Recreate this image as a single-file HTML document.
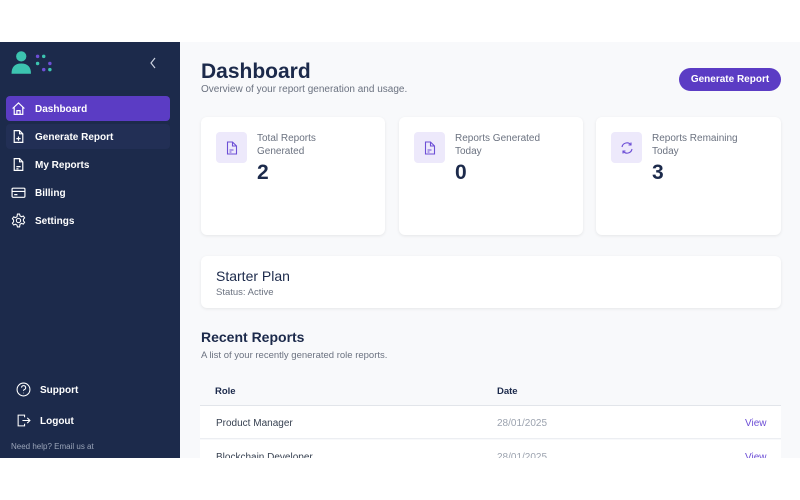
<!DOCTYPE html>
<html><head><style>
*{margin:0;padding:0;box-sizing:border-box}
body{width:800px;height:500px;background:#fff;font-family:"Liberation Sans",sans-serif;position:relative;overflow:hidden}
.app{position:absolute;top:42px;left:0;width:800px;height:416px;background:#f8f9fb;overflow:hidden}
.sb{position:absolute;left:0;top:0;width:180px;height:416px;background:#1c2a4b;color:#fff}
.nav{position:absolute;left:6px;width:164px;height:25px;border-radius:4px;font-size:10px;font-weight:bold;display:flex;align-items:center;padding-left:5px;padding-top:2px}
.nav svg{margin-right:9px;margin-top:-2px}
.a{position:absolute}
.card{position:absolute;background:#fff;border-radius:6px;box-shadow:0 1px 3px rgba(0,0,0,.08)}
.ib{position:absolute;left:15px;top:15px;width:31px;height:31px;background:#ede9fb;border-radius:4px;display:flex;align-items:center;justify-content:center}
.lbl{position:absolute;left:56px;top:15px;font-size:10px;color:#6b7280;line-height:13px}
.num{position:absolute;left:56px;top:44px;font-size:21px;font-weight:bold;color:#1c2a4b}
.row{position:absolute;left:200px;width:581px;height:33px;background:#fff;border-bottom:1px solid #eceef2;font-size:10px;color:#374151}
.row span{position:absolute;top:12px}
</style></head><body>
<div class="app">
<div class="sb">
 <svg class="a" style="left:10px;top:8px" width="46" height="26" viewBox="0 0 45 25">
  <circle cx="11" cy="6" r="5" fill="#3cc4b0"/>
  <path d="M1.5 23 Q1.5 13 11 13 Q20.5 13 20.5 23Z" fill="#3cc4b0"/>
  <circle cx="27" cy="6" r="1.7" fill="#6d4fd6"/><circle cx="33" cy="6" r="1.7" fill="#3cc4b0"/>
  <circle cx="27" cy="13" r="1.7" fill="#3cc4b0"/><circle cx="39" cy="13" r="1.7" fill="#6d4fd6"/>
  <circle cx="33" cy="19" r="1.7" fill="#6d4fd6"/><circle cx="39" cy="19" r="1.7" fill="#3cc4b0"/>
 </svg>
 <svg class="a" style="left:149px;top:15px" width="8" height="12"><path d="M6 1L2 6l4 5" stroke="#cbd2e0" stroke-width="1.2" fill="none"/></svg>
 <div class="nav" style="top:54px;background:#5b3cc4"><svg width="15" height="15" viewBox="0 0 14 14" fill="none" stroke="#fff" stroke-width="1.1"><path d="M1.5 7L7 1.8 12.5 7M3 5.8V12.5h8V5.8M5.5 12.5V9h3v3.5"/></svg>Dashboard</div>
 <div class="nav" style="top:82px;background:#222f55"><svg width="15" height="15" viewBox="0 0 14 14" fill="none" stroke="#fff" stroke-width="1.1"><path d="M3 1.5h5l3 3v8H3z M8 1.5v3h3 M7 7v4 M5 9h4"/></svg>Generate Report</div>
 <div class="nav" style="top:110px"><svg width="15" height="15" viewBox="0 0 14 14" fill="none" stroke="#fff" stroke-width="1.1"><path d="M3 1.5h5l3 3v8H3z M8 1.5v3h3 M5 9h4 M5 11h2"/></svg>My Reports</div>
 <div class="nav" style="top:138px"><svg width="15" height="15" viewBox="0 0 14 14" fill="none" stroke="#fff" stroke-width="1.1"><rect x="1" y="3" width="12" height="8.5" rx="1"/><path d="M1 6h12M3 9h3"/></svg>Billing</div>
 <div class="nav" style="top:166px"><svg width="15" height="15" viewBox="0 0 14 14" fill="none" stroke="#fff" stroke-width="1"><circle cx="7" cy="7" r="2"/><path d="M6 1h2l.4 1.7 1.5.8 1.6-.7 1.2 1.7-1.1 1.3v1.6l1.1 1.3-1.2 1.7-1.6-.7-1.5.8L8 13H6l-.4-1.7-1.5-.8-1.6.7-1.2-1.7 1.1-1.3V6.6L1.3 5.3l1.2-1.7 1.6.7 1.5-.8z"/></svg>Settings</div>
 <div class="nav" style="top:335px;left:11px"><svg width="15" height="15" viewBox="0 0 14 14" fill="none" stroke="#fff" stroke-width="1"><circle cx="7" cy="7" r="6"/><path d="M5.2 5.3a1.9 1.9 0 1 1 2.5 1.8C7.2 7.3 7 7.7 7 8.3M7 10v.5"/></svg>Support</div>
 <div class="nav" style="top:366px;left:11px"><svg width="15" height="15" viewBox="0 0 14 14" fill="none" stroke="#fff" stroke-width="1"><path d="M8 4V2H2v10h6v-2M6 7h7M10.5 4.5 13 7l-2.5 2.5"/></svg>Logout</div>
 <div class="a" style="left:11px;top:400px;font-size:8px;color:#9aa4b8">Need help? Email us at</div>
</div>
<div class="a" style="left:201px;top:18px;font-size:21px;font-weight:bold;color:#1c2a4b">Dashboard</div>
<div class="a" style="left:201px;top:42px;font-size:10px;color:#6b7280">Overview of your report generation and usage.</div>
<div class="a" style="left:679px;top:26px;width:102px;height:23px;border-radius:12px;background:#5b3cc4;color:#fff;font-size:10px;font-weight:bold;text-align:center;line-height:23px">Generate Report</div>
<div class="card" style="left:201px;top:75px;width:184px;height:118px"><div class="ib"><svg width="12" height="14" viewBox="0 0 12 14" fill="none" stroke="#6d4fd6" stroke-width="1.1"><path d="M1.5 1h5l4 4v8h-9z M6.5 1v4h4 M3.5 9h4 M3.5 11h2"/></svg></div><div class="lbl">Total Reports<br>Generated</div><div class="num">2</div></div>
<div class="card" style="left:399px;top:75px;width:184px;height:118px"><div class="ib"><svg width="12" height="14" viewBox="0 0 12 14" fill="none" stroke="#6d4fd6" stroke-width="1.1"><path d="M1.5 1h5l4 4v8h-9z M6.5 1v4h4 M3.5 9h4 M3.5 11h2"/></svg></div><div class="lbl">Reports Generated<br>Today</div><div class="num">0</div></div>
<div class="card" style="left:596px;top:75px;width:185px;height:118px"><div class="ib"><svg width="14" height="14" viewBox="0 0 14 14" fill="none" stroke="#6d4fd6" stroke-width="1.1"><path d="M2 6a5 5 0 0 1 9-2M12 8a5 5 0 0 1-9 2M11 1.5V4H8.5M3 12.5V10h2.5"/></svg></div><div class="lbl">Reports Remaining<br>Today</div><div class="num">3</div></div>
<div class="card" style="left:201px;top:214px;width:580px;height:52px"><div class="a" style="left:15px;top:12px;font-size:14px;color:#1c2a4b">Starter Plan</div><div class="a" style="left:15px;top:31px;font-size:9.5px;color:#6b7280">Status: Active</div></div>
<div class="a" style="left:201px;top:287px;font-size:14px;font-weight:bold;color:#1c2a4b">Recent Reports</div>
<div class="a" style="left:201px;top:308px;font-size:9.5px;color:#6b7280">A list of your recently generated role reports.</div>
<div class="a" style="left:200px;top:363px;width:581px;height:1px;background:#e2e5ea"></div>
<div class="a" style="left:215px;top:344px;font-size:9.5px;font-weight:bold;color:#1c2a4b">Role</div>
<div class="a" style="left:497px;top:344px;font-size:9.5px;font-weight:bold;color:#1c2a4b">Date</div>
<div class="row" style="top:364px"><span style="left:16px">Product Manager</span><span style="left:297px;color:#9ca3af">28/01/2025</span><span style="left:545px;color:#6d4fd6">View</span></div>
<div class="row" style="top:398px"><span style="left:16px">Blockchain Developer</span><span style="left:297px;color:#9ca3af">28/01/2025</span><span style="left:545px;color:#6d4fd6">View</span></div>
</div>
</body></html>
